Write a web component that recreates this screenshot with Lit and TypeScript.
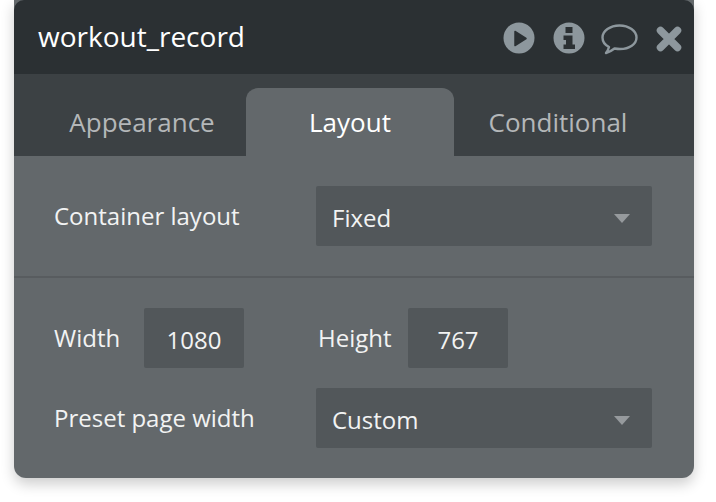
import { LitElement, html, css } from "lit";
import { customElement } from "lit/decorators.js";

@customElement("app-root")
export class AppRoot extends LitElement {
  static styles = css`
    :host { display: block; width: 716px; height: 502px; background: #fff; font-family: "Open Sans", sans-serif; overflow: hidden; }
    .panel { width: 680px; height: 478px; margin-left: 14px; background: #63686b; border-radius: 0 0 12px 12px; box-shadow: 0 6px 14px rgba(0,0,0,.2); display: flex; flex-direction: column; overflow: hidden; }
    .head { height: 74px; flex: none; background: #2b3033; display: flex; align-items: center; padding: 0 12px 0 24px; border-radius: 10px 10px 0 0; }
    .title { flex: 1; color: #fff; font-size: 28px; margin-top: -2px; }
    .icons { display: flex; align-items: center; margin-top: 2px; }
    .icons svg { display: block; }
    .play { margin-right: 18px; }
    .info { margin-right: 15px; }
    .chat { margin: 2px 18px 0 0; }
    .close { margin-top: 2px; }
    .tabs { height: 82px; flex: none; box-sizing: border-box; padding-left: 24px; background: #3c4144; display: flex; align-items: flex-end; }
    .tab { width: 208px; height: 68px; display: flex; align-items: center; justify-content: center; font-size: 26px; color: #b4b7b9; }
    .tab.on { background: #63686b; color: #fff; border-radius: 12px 12px 0 0; }
    .sec1 { height: 122px; flex: none; box-sizing: border-box; border-bottom: 2px solid #585c5f; padding: 30px 42px 0 40px; display: flex; justify-content: space-between; }
    .lbl { font-size: 24px; color: #f2f3f3; line-height: 60px; }
    .sel { width: 336px; height: 60px; background: #52575a; border-radius: 2px; box-sizing: border-box; padding: 0 16px; display: flex; align-items: center; justify-content: space-between; color: #f2f3f3; font-size: 24px; }
    .sel span { position: relative; top: 1px; }
    .arrow { width: 0; height: 0; border-left: 8.500px solid transparent; border-right: 8.500px solid transparent; border-top: 9px solid #969a9d; margin: 4px 6px 0 0; }
    .sec2 { padding: 30px 42px 0 40px; display: flex; flex-direction: column; gap: 20px; }
    .row { display: flex; justify-content: space-between; }
    .dims { display: flex; }
    .wlbl { width: 90px; }
    .hlbl { width: 90px; margin-left: 74px; }
    .num { width: 100px; height: 60px; background: #52575a; border-radius: 2px; color: #f2f3f3; font-size: 24px; display: flex; align-items: center; justify-content: center; padding-top: 2px; box-sizing: border-box; }
  `;

  render() {
    return html`<div class="panel">
      <div class="head">
        <div class="title">workout_record</div>
        <div class="icons">
          <svg class="play" width="32" height="32" viewBox="0 0 32 32"><circle cx="16" cy="16" r="15.500" fill="#8d979d"/><path fill="#2b3033" stroke="#2b3033" stroke-width="1.500" stroke-linejoin="round" d="M12 9.500l11 7-11 7z"/></svg>
          <svg class="info" width="32" height="32" viewBox="0 0 32 32"><path fill="#8d979d" fill-rule="evenodd" d="M16 .5a15.500 15.500 0 1 0 0 31 15.500 15.500 0 0 0 0-31zM12.500 5h7v6h-7zM10.500 13.500h9v9h2.500v4.500H10.500v-4.500h2.500v-4.500h-2.500z"/></svg>
          <svg class="chat" width="38" height="32" viewBox="0 0 38 32"><path fill="none" stroke="#8d979d" stroke-width="2.400" stroke-linejoin="round" d="M19.500 2.500C10 2.500 2.500 8 2.500 14.500c0 4 2.500 7.500 6.500 9.500-.5 2-1.500 4-3 6 3-.8 6-2.500 8.500-4.500 1.800.3 3.500.5 5.500.5 9.500 0 16.500-5 16.500-11.500S29 2.500 19.500 2.500z"/></svg>
          <svg class="close" width="26" height="26" viewBox="0 0 26 26"><path stroke="#8d979d" stroke-width="7.500" stroke-linecap="round" d="M4.500 4.500l17 17M21.500 4.500l-17 17"/></svg>
        </div>
      </div>
      <div class="tabs">
        <div class="tab">Appearance</div>
        <div class="tab on">Layout</div>
        <div class="tab">Conditional</div>
      </div>
      <div class="sec1">
        <div class="lbl">Container layout</div>
        <div class="sel"><span>Fixed</span><div class="arrow"></div></div>
      </div>
      <div class="sec2">
        <div class="row">
          <div class="dims">
            <div class="lbl wlbl">Width</div>
            <div class="num">1080</div>
            <div class="lbl hlbl">Height</div>
            <div class="num">767</div>
          </div>
        </div>
        <div class="row">
          <div class="lbl">Preset page width</div>
          <div class="sel"><span>Custom</span><div class="arrow"></div></div>
        </div>
      </div>
    </div>`;
  }
}
